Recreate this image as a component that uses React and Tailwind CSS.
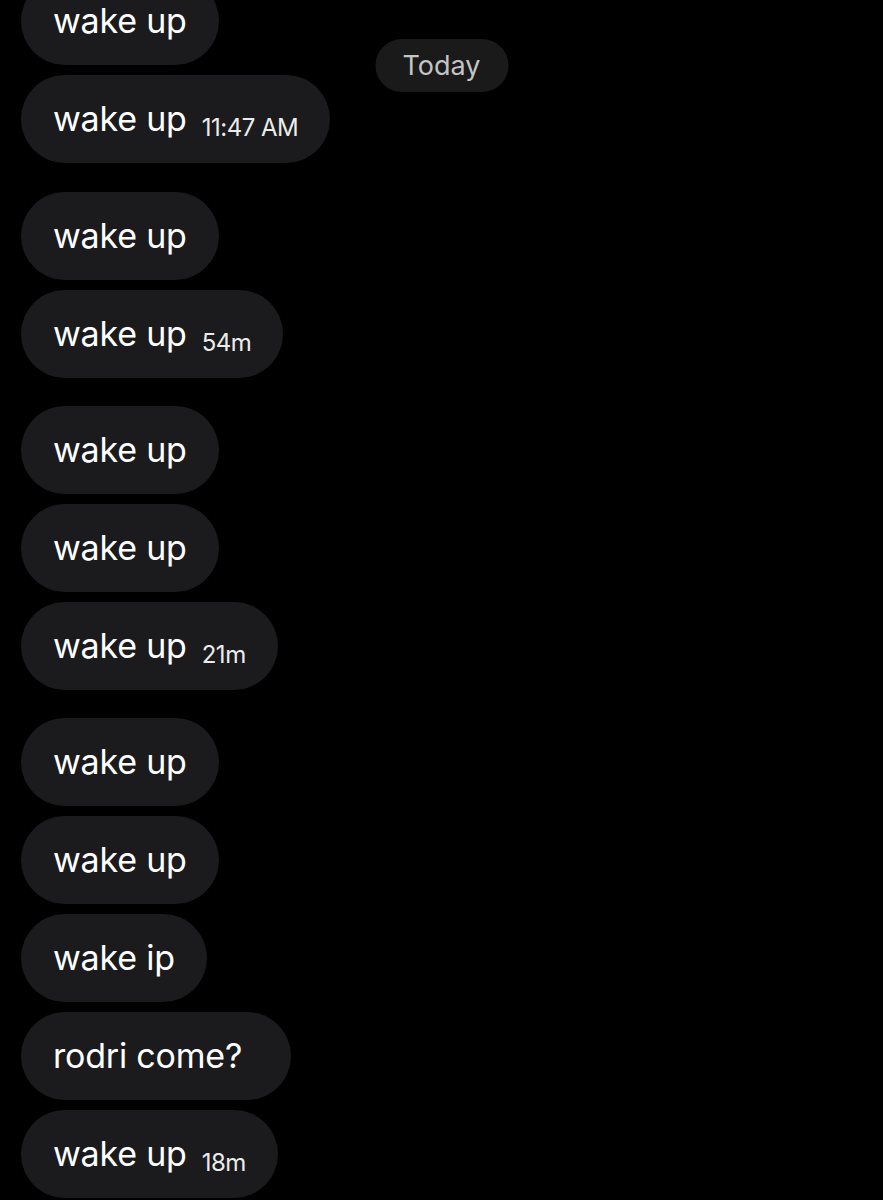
const MESSAGES = [
  { text: "wake up", gap: "" },
  { text: "wake up", time: "11:47 AM", gap: "mt-[10px]" },
  { text: "wake up", gap: "mt-[29px]" },
  { text: "wake up", time: "54m", gap: "mt-[10px]" },
  { text: "wake up", gap: "mt-[28px]" },
  { text: "wake up", gap: "mt-[10px]" },
  { text: "wake up", time: "21m", gap: "mt-[10px]" },
  { text: "wake up", gap: "mt-[28px]" },
  { text: "wake up", gap: "mt-[10px]" },
  { text: "wake ip", gap: "mt-[10px]" },
  { text: "rodri come?", gap: "mt-[10px]", wide: true },
  { text: "wake up", time: "18m", gap: "mt-[10px]" },
];

function Bubble({ msg }) {
  return (
    <div
      className={`self-start h-[88px] flex items-center rounded-full bg-[#1b1b1d] pl-8 ${msg.wide ? "pr-[49px]" : "pr-8"} ${msg.gap}`}
    >
      <span className="text-[34px] text-white leading-none tracking-[-0.2px]">{msg.text}</span>
      {msg.time && (
        <span className="ml-[15px] mt-[18px] text-[24px] text-[#ececec] leading-none tracking-[-0.5px]">
          {msg.time}
        </span>
      )}
    </div>
  );
}

export default function App() {
  return (
    <div
      className="relative w-[883px] h-[1200px] overflow-hidden bg-black"
      style={{ fontFamily: "Inter, 'Liberation Sans', sans-serif" }}
    >
      <div className="flex flex-col pl-[21px] -mt-[23px]">
        {MESSAGES.map((m, i) => (
          <Bubble key={i} msg={m} />
        ))}
      </div>
      <div className="absolute top-[39px] left-1/2 -translate-x-1/2 h-[53px] w-[133px] rounded-full bg-[#1a1a1a] flex items-center justify-center">
        <span className="text-[27px] text-[#c4c4c4] leading-none">Today</span>
      </div>
    </div>
  );
}
